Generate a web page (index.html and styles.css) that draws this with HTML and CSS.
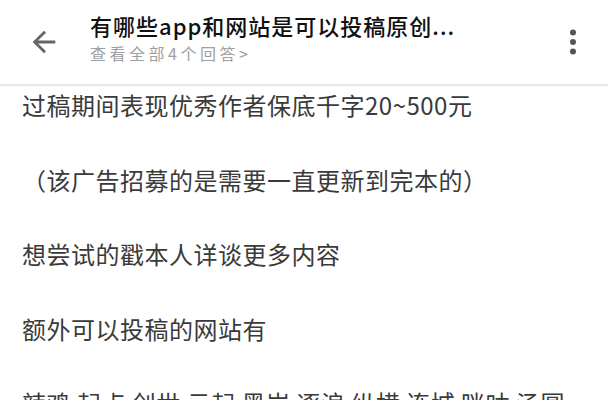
FILE: index.html
```html
<!DOCTYPE html>
<html lang="zh-CN">
<head>
  <meta charset="UTF-8" />
  <meta name="viewport" content="width=device-width, initial-scale=1.0"/>
  <title>查看回答</title>
  <link rel="stylesheet" href="styles.css">
</head>
<body>
  <header class="top-bar">
    <button class="icon-btn back-btn" aria-label="返回">
      <svg viewBox="0 0 24 24" width="34" height="34">
        <path d="M20 11H7.83l5.59-5.59L12 4l-8 8 8 8 1.41-1.41L7.83 13H20v-2z" fill="#666"/>
      </svg>
    </button>
    <div class="title-block">
      <div class="title">有哪些app和网站是可以投稿原创...</div>
      <div class="subtitle">查看全部4个回答&gt;</div>
    </div>
    <button class="icon-btn menu-btn" aria-label="更多">
      <svg viewBox="0 0 24 24" width="38" height="38">
        <circle cx="12" cy="6" r="1.9" fill="#555"/>
        <circle cx="12" cy="12" r="1.9" fill="#555"/>
        <circle cx="12" cy="18" r="1.9" fill="#555"/>
      </svg>
    </button>
  </header>

  <main class="answer">
    <p>过稿期间表现优秀作者保底千字20~500元</p>
    <p>（该广告招募的是需要一直更新到完本的）</p>
    <p>想尝试的戳本人详谈更多内容</p>
    <p>额外可以投稿的网站有</p>
    <p>辣鸡 起点 创世 云起 黑岩 逐浪 纵横 连城 咪咕 汤圆</p>
  </main>
</body>
</html>
```

FILE: styles.css
```css
body {
  margin: 0;
  padding: 0;
  background: #fff;
  font-family: "Noto Sans CJK SC", "Noto Sans", sans-serif;
  color: #3a3a3a;
  overflow: hidden;
}

.top-bar {
  display: flex;
  align-items: center;
  height: 84px;
  border-bottom: 1px solid #e2e2e2;
  box-shadow: 0 1px 2px rgba(0, 0, 0, 0.1);
  background: #fff;
}

.icon-btn {
  display: flex;
  align-items: center;
  justify-content: center;
  padding: 0;
  border: none;
  background: none;
  cursor: pointer;
}

.back-btn {
  width: 88px;
  height: 84px;
}

.title-block {
  flex: 1;
  align-self: flex-start;
  padding-top: 11px;
  padding-left: 2px;
}

.title {
  font-size: 22px;
  line-height: 29px;
  font-weight: 500;
  color: #111;
  letter-spacing: 1px;
  white-space: nowrap;
}

.subtitle {
  font-size: 16px;
  line-height: 26px;
  color: #a0a0a0;
  letter-spacing: 3.5px;
}

.menu-btn {
  width: 38px;
  height: 84px;
  margin-right: 16px;
}

.answer {
  padding: 1px 22px 0;
}

.answer p {
  margin: 0 0 37.5px;
  font-size: 24px;
  line-height: 37px;
  letter-spacing: 0.5px;
}
```
